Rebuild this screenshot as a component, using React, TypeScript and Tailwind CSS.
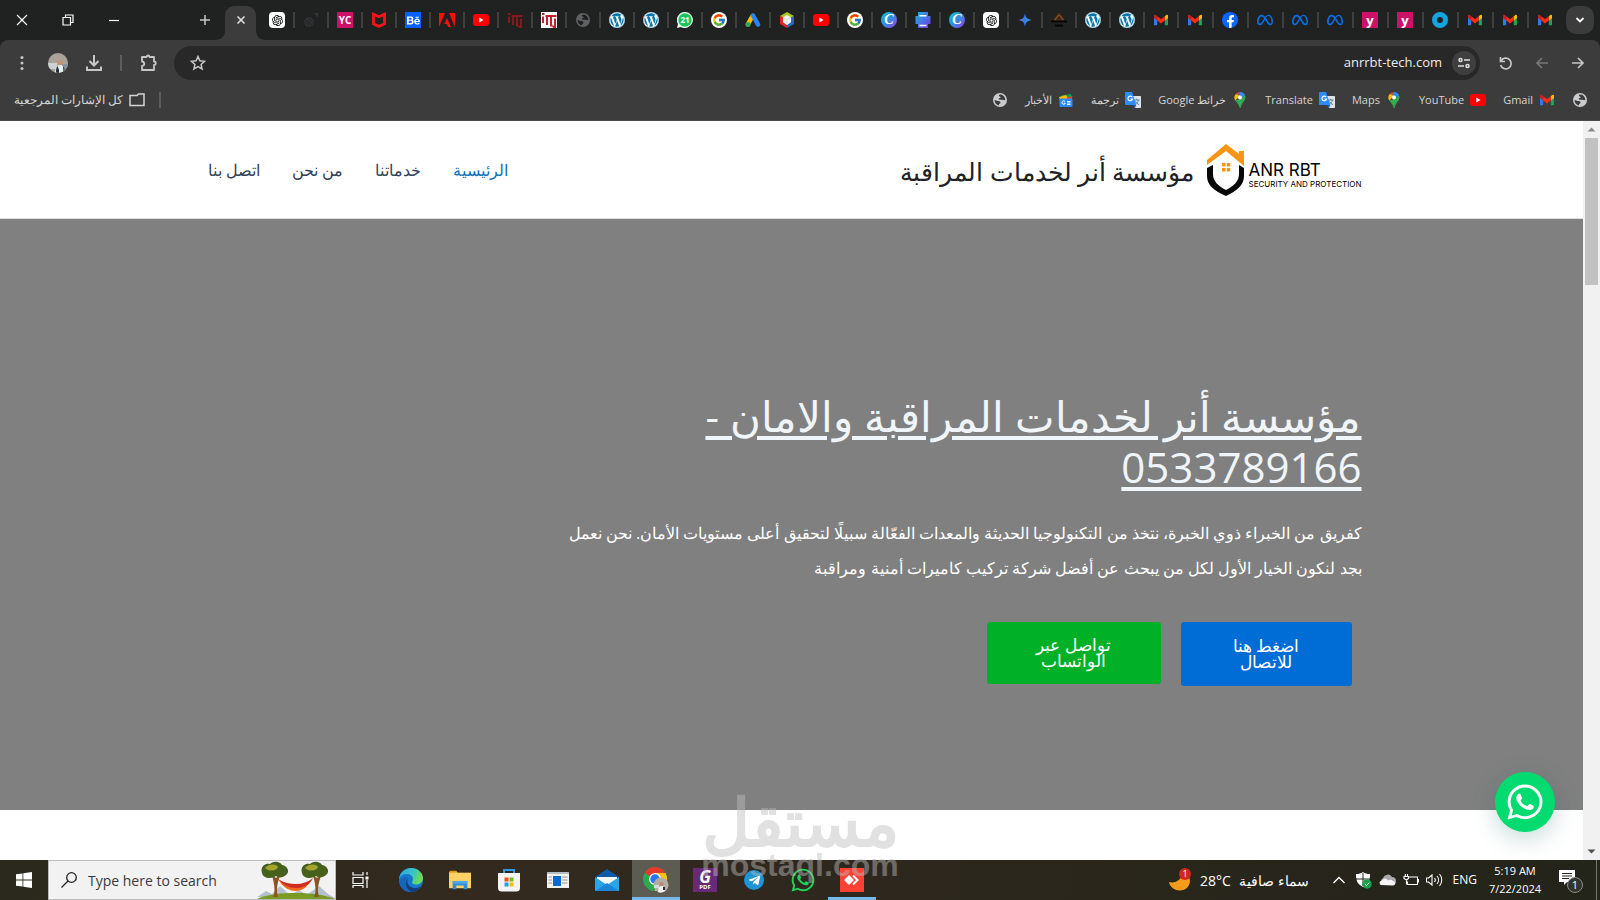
import type { ReactNode } from "react";
import { FaWordpress, FaWhatsapp, FaFacebookF, FaBehance, FaTelegramPlane } from "react-icons/fa";
import { FaMeta } from "react-icons/fa6";
import { FcGoogle } from "react-icons/fc";
import { SiMcafee } from "react-icons/si";
import { RiOpenaiFill } from "react-icons/ri";

/* ---------- small brand marks ---------- */

const Gmail = () => (
  <svg viewBox="0 0 16 16" className="size-4">
    <path d="M1 4v9.3h3.2V6.8z" fill="#2a7df0" />
    <path d="M15 4v9.3h-3.2V6.8z" fill="#1fa550" />
    <path d="M11.8 4.2 13.3 3c.9-.5 1.7.1 1.7 1v2l-3.2 2.5z" fill="#fbbc04" />
    <path d="M4.2 4.2 2.7 3C1.800 2.500 1 3.100 1 4v2l3.200 2.500z" fill="#c5221f" />
    <path d="M4.200 4.200 8 7.200l3.800-3v4.300L8 11.400 4.200 8.500z" fill="#ff2b17" />
  </svg>
);
const YouTube = () => (
  <svg viewBox="0 0 16 16" className="size-4">
    <rect y="2" width="16" height="12" rx="3" fill="#f00" />
    <path d="M6.300 5.500v5L10.500 8z" fill="#fff" />
  </svg>
);
const Pin = () => (
  <svg viewBox="0 0 16 16" className="size-4">
    <path d="M8 0a5.500 5.500 0 0 0-4.200 2L6 4z" fill="#ea4335" />
    <path d="M8 0a5.500 5.500 0 0 1 5 3L8 7 6 4z" fill="#2a8cf4" />
    <path d="M3.800 2a5.500 5.500 0 0 0-.6 6.500L8 4z" fill="#fbbc04" />
    <path d="M13 3c1 2 .5 4-.7 5.700C10.500 11 9.300 12.500 8.700 16h-1C7.300 13 5 11 3.200 8.500L8 7z" fill="#34a853" />
    <circle cx="8" cy="5.500" r="2" fill="#fff" />
  </svg>
);
const TranslateIcon = () => (
  <svg viewBox="0 0 16 16" className="size-4">
    <path d="M6 4h9.300c.4 0 .7.300.7.700V15.300c0 .4-.3.700-.7.700H10z" fill="#dfe3e8" />
    <path d="M9 8h5.500M11.700 6.800V8m1.800 0c-.5 2-2 3.500-3.500 4.500M10.500 9.500c.7 1.300 2 2.500 3.500 3.200" stroke="#5f7f9f" strokeWidth="1" fill="none" />
    <path d="M.8 0H7l4.300 13H.8C.3 13 0 12.700 0 12.200V.8C0 .3.300 0 .8 0z" fill="#2a8cff" />
    <path d="M7.200 5.200A2.300 2.300 0 1 0 7.500 7H5.500" stroke="#fff" strokeWidth="1.200" fill="none" />
    <path d="M8 13h3.300L10 16z" fill="#1a5fc8" />
  </svg>
);
const News = () => (
  <svg viewBox="0 0 16 16" className="size-4">
    <path d="M3 3.500 13 2l1 5H3z" fill="#0c9d58" />
    <path d="m1 5 7-2 3 5H2z" fill="#fbbc04" />
    <path d="m8 6 6.500-2L13 10z" fill="#ea4335" />
    <rect x="1.500" y="6.500" width="13" height="8.500" rx="1" fill="#2a8cff" />
    <path d="M7 9.500a1.700 1.700 0 1 0 .3 1.700H6M9 9.500h3.500M9 11h3.500M9 12.500h3.500" stroke="#fff" strokeWidth=".9" fill="none" />
  </svg>
);
const Globe = ({ dim = false }: { dim?: boolean }) => (
  <svg viewBox="0 0 16 16" className="size-4">
    <circle cx="8" cy="8" r="7" fill={dim ? "#5f6163" : "#c9cbcd"} />
    <path d="M8 2.500c-1.500.3-1.300 1.600-.3 1.900 1.300.4 1.100 1.600 0 1.700-1.500.2-1 1.700.3 1.700h2.400c1.300 0 2.100.8 2.900 0C13 4.500 11 2.500 8 2.500zM2.500 8c0 3 2 5 4.500 5.500V12c.8-.3 1.700-.8 1.500-1.800C8.300 9 6.500 9.200 5.500 9 4.500 8.800 4 8 2.500 8z" fill={dim ? "#202221" : "#3c3c3c"} />
  </svg>
);
const OpenAi = () => (
  <span className="flex size-4 items-center justify-center rounded-sm bg-white text-black">
    <RiOpenaiFill size={13} />
  </span>
);
const Ghost = () => (
  <svg viewBox="0 0 16 16" className="size-4">
    <circle cx="6" cy="10" r="5" fill="#303132" />
    <path d="M11 1h4v5z" fill="#343536" />
    <path d="m3 8 6 5M2 10l5 4M5 6l6 5" stroke="#232425" />
  </svg>
);
const Mark = ({ children, tone }: { children: ReactNode; tone: string }) => (
  <span className={`flex size-4 items-center justify-center text-[10px] leading-4 font-bold text-white ${tone}`}>{children}</span>
);
const Adobe = () => (
  <svg viewBox="0 0 16 16" className="size-4" fill="#fa0f00">
    <path d="M0 1h6L0 15zM16 1h-6l6 14zM8 6l4 9H9.200L8 12H5.200z" />
  </svg>
);
const Itj = ({ boxed = false }: { boxed?: boolean }) => (
  <svg viewBox="0 0 16 16" className="size-4">
    {boxed && <rect width="16" height="16" fill="#fff" />}
    <path d="M2 4.500V11M1 2h2.500M4.500 4h11M6 5v8M10 5v9M14 6.500V15l-2.500-.5M9 13.500h2.500" stroke={boxed ? "#bf2328" : "#a5161c"} strokeWidth={boxed ? 2 : 1.500} fill="none" />
  </svg>
);
const WordPress = () => (
  <span className="flex size-4 items-center justify-center rounded-full bg-white text-[#0877a8]">
    <FaWordpress size={16} />
  </span>
);
const WhatsBadge = () => (
  <svg viewBox="0 0 16 16" className="size-4">
    <path d="M8 0a8 8 0 1 1-4 15L0 16l1-4A8 8 0 0 1 8 0z" fill="#e9fbef" />
    <circle cx="8" cy="8" r="6.700" fill="#1cc45a" />
    <text x="8" y="11" fontSize="8" fontWeight="700" textAnchor="middle" fill="#fff">21</text>
  </svg>
);
const Google = () => (
  <span className="flex size-4 items-center justify-center rounded-full bg-white">
    <FcGoogle size={14} />
  </span>
);
const Ads = () => (
  <svg viewBox="0 0 16 16" className="size-4">
    <path d="M7.500 4 3 12" stroke="#fbbc04" strokeWidth="4.500" strokeLinecap="round" />
    <path d="m8 3.500 5 9" stroke="#2a85f4" strokeWidth="4.500" strokeLinecap="round" />
    <circle cx="3" cy="12.500" r="2.500" fill="#34a853" />
  </svg>
);
const Cube = () => (
  <svg viewBox="0 0 16 16" className="size-4">
    <path d="m8 0 7 4-7 4-7-4z" fill="#a8c820" />
    <path d="M1 4v8l7 4V8z" fill="#e0252b" />
    <path d="M15 4v8l-7 4V8z" fill="#2468c8" />
    <path d="m8 3 4 2.300v5L8 13l-4-2.700v-5z" fill="#f4f4f0" />
    <path d="m4 5.300 4 2.300 4-2.300M8 7.600V13" stroke="#c8c8c8" fill="none" strokeWidth=".7" />
  </svg>
);
const Canva = () => (
  <span className="flex size-4 items-center justify-center rounded-full bg-linear-to-br from-[#00c4cc] via-[#2f8be0] to-[#7d2ae8] font-['Liberation_Serif',serif] text-[14px] leading-4 font-bold text-white italic">C</span>
);
const Printer = () => (
  <svg viewBox="0 0 16 16" className="size-4">
    <defs>
      <linearGradient id="pr" x1="0" y1="0" x2="1" y2="1">
        <stop offset="0" stopColor="#12b8e0" />
        <stop offset="1" stopColor="#7a35ea" />
      </linearGradient>
    </defs>
    <path d="M3 0h10v4h2.500v8H13v4H3v-4H.5V4H3z" fill="url(#pr)" />
    <path d="M4.500 3.800h7M4.500 13.500h7" stroke="#fff" strokeWidth="1.500" />
  </svg>
);
const Spark = () => (
  <svg viewBox="0 0 16 16" className="size-4">
    <defs>
      <linearGradient id="sp">
        <stop offset="0" stopColor="#9b72cb" />
        <stop offset=".5" stopColor="#2b7de9" />
        <stop offset="1" stopColor="#5bb0e8" />
      </linearGradient>
    </defs>
    <path d="M8 1C8.800 6 10 7.200 15 8 10 8.800 8.800 10 8 15 7.200 10 6 8.800 1 8 6 7.200 7.200 6 8 1z" fill="url(#sp)" />
  </svg>
);
const DarkLogo = () => (
  <svg viewBox="0 0 16 16" className="size-4">
    <path d="m8 1 5 7H3z" fill="#3a2115" stroke="#6a3a1c" />
    <path d="m4 8 4-5 4 5" stroke="#a45a26" fill="none" />
    <path d="M0 9.500h16M4 13.500h8" stroke="#050505" strokeWidth="2" />
  </svg>
);
const Facebook = () => (
  <span className="flex size-4 items-end justify-center overflow-hidden rounded-full bg-[#0866ff] text-white">
    <FaFacebookF size={13} />
  </span>
);
const Ring = () => (
  <svg viewBox="0 0 16 16" className="size-4">
    <circle cx="8" cy="8" r="5.500" fill="none" stroke="#14a5e0" strokeWidth="5" />
  </svg>
);
const Yc = () => <Mark tone="bg-[#cc1168]">YC</Mark>;
const Y = () => (
  <Mark tone="bg-[#cc1168]">
    <span className="text-[13px] leading-3">y</span>
  </Mark>
);
const Mc = () => <SiMcafee size={16} color="#f5141e" />;
const Be = () => (
  <Mark tone="bg-[#0560ff]">
    <FaBehance size={13} />
  </Mark>
);
const MetaIcon = () => <FaMeta size={16} color="#0a6fe8" />;

const narrowTabs: [string, () => ReactNode][] = [
  ["ChatGPT", OpenAi], ["Tab", Ghost], ["YC", Yc], ["McAfee", Mc], ["Behance", Be], ["Adobe", Adobe], ["YouTube", YouTube],
  ["ITJ", () => <Itj />], ["ITJ", () => <Itj boxed />], ["Page", () => <Globe dim />], ["WordPress", WordPress],
  ["WordPress", WordPress], ["WhatsApp", WhatsBadge], ["Google", Google], ["Google Ads", Ads], ["Cube", Cube],
  ["YouTube", YouTube], ["Google", Google], ["Canva", Canva], ["Print", Printer], ["Canva", Canva], ["ChatGPT", OpenAi],
  ["Gemini", Spark], ["Logo", DarkLogo], ["WordPress", WordPress], ["WordPress", WordPress], ["Gmail", Gmail],
];
const wideTabs: [string, () => ReactNode][] = [
  ["Gmail", Gmail], ["Facebook", Facebook], ["Meta", MetaIcon], ["Meta", MetaIcon], ["Meta", MetaIcon], ["Y", Y], ["Y", Y],
  ["Ring", Ring], ["Gmail", Gmail], ["Gmail", Gmail],
];

function Tab({ name, Icon, width, last }: { name: string; Icon: () => ReactNode; width: string; last?: boolean }) {
  return (
    <button aria-label={name} className={`flex h-5 shrink-0 items-center justify-between ${width}`}>
      <Icon />
      {!last && <span className="mr-2 h-4 w-0.5 bg-[#3f4140]" />}
    </button>
  );
}

function TabStrip() {
  return (
    <div className="flex h-10 items-center bg-[#202221]">
      <div className="flex w-[188px] shrink-0 items-center text-white">
        <button aria-label="Close" className="flex h-8 w-11 items-center justify-center">
          <svg viewBox="0 0 12 12" className="size-3" stroke="currentColor" strokeWidth="1.200"><path d="m1 1 10 10M11 1 1 11" /></svg>
        </button>
        <button aria-label="Restore" className="flex h-8 w-12 items-center justify-center">
          <svg viewBox="0 0 12 12" className="size-3" stroke="currentColor" strokeWidth="1.200" fill="none"><path d="M1 3.500h7.500V11H1zM3.500 3.500V1H11v7.500H8.500" /></svg>
        </button>
        <button aria-label="Minimize" className="flex h-8 w-11 items-center justify-center">
          <svg viewBox="0 0 12 12" className="size-3" stroke="currentColor" strokeWidth="1.200"><path d="M1 6.500h10" /></svg>
        </button>
      </div>
      <button aria-label="New tab" className="flex h-8 w-[34px] shrink-0 items-center justify-center text-[#c7c7c7]">
        <svg viewBox="0 0 12 12" className="size-3" stroke="currentColor" strokeWidth="1.500"><path d="M6 1v10M1 6h10" /></svg>
      </button>
      <div className="flex h-10 w-[47px] shrink-0 items-end pt-1.5">
        <svg viewBox="0 0 46 34" className="h-[34px] w-[46px] overflow-visible">
          <path d="M-8 34C0 34 3 30 3 24V10C3 4 7 0 13 0h11c6 0 10 4 10 10v14c0 6 3 10 10 10z" fill="#3c3c3c" />
          <path d="m15.500 10.500 7 7m0-7-7 7" stroke="#dedede" strokeWidth="1.600" />
        </svg>
      </div>
      {narrowTabs.map(([name, Icon], i) => <Tab key={i} name={name} Icon={Icon} width="w-[34px]" />)}
      {wideTabs.map(([name, Icon], i) => <Tab key={i} name={name} Icon={Icon} width="w-[35px]" />)}
      <Tab name="Gmail" Icon={Gmail} width="w-4" last />
      <button aria-label="Search tabs" className="mr-1.5 ml-auto flex size-7 shrink-0 items-center justify-center rounded-[10px] bg-[#3c3c3c] text-white">
        <svg viewBox="0 0 10 10" className="size-2.5" stroke="currentColor" strokeWidth="1.800" fill="none"><path d="m1.500 3 3.500 3.500L8.500 3" /></svg>
      </button>
    </div>
  );
}

function Toolbar() {
  return (
    <div className="flex h-[46px] items-center rounded-t-lg bg-[#3c3c3c] text-[#c7c7c7]">
      <button aria-label="Menu" className="ml-3.5 flex size-4 items-center justify-center">
        <svg viewBox="0 0 16 16" className="size-4" fill="currentColor"><circle cx="8" cy="2.500" r="1.500" /><circle cx="8" cy="8" r="1.500" /><circle cx="8" cy="13.500" r="1.500" /></svg>
      </button>
      <button aria-label="Profile" className="ml-[18px] size-5">
        <svg viewBox="0 0 20 20" className="size-5">
          <clipPath id="av"><circle cx="10" cy="10" r="10" /></clipPath>
          <g clipPath="url(#av)">
            <path d="M0 0h20v20H0z" fill="#a9a39a" /><path d="M0 10h9v6H0z" fill="#cfd2d4" /><path d="M14 11h6v9h-6z" fill="#87949b" />
            <circle cx="12" cy="9.500" r="2.500" fill="#c79270" /><path d="M7 20c0-5 2-8 5-8s5 3 5 8z" fill="#e9edf0" /><path d="M8 20c0-3 0-5 1.500-7l1.500 4v3zM15 13c1.500 1.500 2 4 2 7h-1.500z" fill="#22303a" />
          </g>
        </svg>
      </button>
      <button aria-label="Downloads" className="ml-[17px] size-[18px]">
        <svg viewBox="0 0 18 18" className="size-[18px]" stroke="currentColor" strokeWidth="2" fill="none"><path d="M9 1v10M4.500 7 9 11.500 13.500 7M2 12.500V16h14v-3.500" /></svg>
      </button>
      <span className="ml-[17px] h-4 w-0.5 bg-[#5c5c5c]" />
      <button aria-label="Extensions" className="ml-[18px] size-[18px]">
        <svg viewBox="0 0 18 18" className="size-[18px]" stroke="currentColor" strokeWidth="1.800" fill="none" strokeLinejoin="round"><path d="M2 3h4.500c0-2 3-2 3 0H14v4.500c2.300 0 2.300 3.500 0 3.500v5H2v-4c3-.3 3-4.200 0-4.500z" /></svg>
      </button>
      <div className="ml-4 flex h-[34px] flex-1 items-center rounded-full bg-[#282828] px-1">
        <button aria-label="Bookmark this page" className="ml-3 size-4">
          <svg viewBox="0 0 16 16" className="size-4" stroke="currentColor" strokeWidth="1.500" fill="none"><path d="m8 1.500 1.900 4.300 4.700.5-3.500 3.100 1 4.600L8 11.600 3.900 14l1-4.600L1.400 6.300l4.700-.5z" /></svg>
        </button>
        <input aria-label="Address" defaultValue="anrrbt-tech.com" className="mr-2.5 min-w-0 flex-1 bg-transparent text-right text-[13px] text-[#ececec] outline-none" />
        <button aria-label="Site information" className="flex size-6 items-center justify-center rounded-full bg-[#3f3f3f]">
          <svg viewBox="0 0 12 12" className="size-3" stroke="#e0e0e0" strokeWidth="1.500" fill="none"><circle cx="2.500" cy="3" r="1.500" /><path d="M6 3h6M0 9h6" /><circle cx="9.500" cy="9" r="1.500" /></svg>
        </button>
      </div>
      <button aria-label="Reload" className="ml-[18px] size-4">
        <svg viewBox="0 0 16 16" className="size-4" stroke="currentColor" strokeWidth="1.700" fill="none"><path d="M2.500 2v4.500H7M3 6a5.400 5.400 0 1 1-.4 4" /></svg>
      </button>
      <button aria-label="Forward" className="ml-5 size-4 text-[#777]">
        <svg viewBox="0 0 16 16" className="size-4" stroke="currentColor" strokeWidth="1.700" fill="none"><path d="M14 8H3m5-5L3 8l5 5" /></svg>
      </button>
      <button aria-label="Back" className="mr-3.5 ml-5 size-4">
        <svg viewBox="0 0 16 16" className="size-4" stroke="currentColor" strokeWidth="1.700" fill="none"><path d="M2 8h11M8 3l5 5-5 5" /></svg>
      </button>
    </div>
  );
}

const bookmarks: [string, () => ReactNode][] = [
  ["الأخبار", News], ["ترجمة", TranslateIcon], ["خرائط Google", Pin], ["Translate", TranslateIcon], ["Maps", Pin], ["YouTube", YouTube], ["Gmail", Gmail],
];

function Bookmarks() {
  return (
    <div className="flex h-[35px] items-center justify-between border-b border-[#4a4a4a] bg-[#3c3c3c] pb-1.5 text-[11px] text-[#d4d4d4]">
      <div className="ml-3.5 flex items-center">
        <button className="flex items-center gap-1.5 text-[12px]">
          <span dir="rtl">كل الإشارات المرجعية</span>
          <svg viewBox="0 0 16 14" className="h-3.5 w-4" stroke="currentColor" strokeWidth="1.500" fill="none"><path d="M1 2.500h7l1.500-1.500H15v11.500H1z" /></svg>
        </button>
        <span className="ml-3.5 h-4 w-0.5 bg-[#5c5c5c]" />
      </div>
      <div className="mr-3 flex items-center gap-[17px]">
        <a href="#page" aria-label="Page"><Globe /></a>
        {bookmarks.map(([label, Icon]) => (
          <a key={label} href={`#${label}`} className="flex items-center gap-1.5 whitespace-nowrap"><span dir="auto">{label}</span><Icon /></a>
        ))}
        <a href="#home" aria-label="Home"><Globe /></a>
      </div>
    </div>
  );
}

/* ---------- web page ---------- */

function BrandLogo() {
  return (
    <div dir="ltr" className="flex items-center">
      <svg viewBox="0 0 38 52" className="h-[52px] w-[38px]">
        <path d="M0 16 19 0l13 10V7h5v15L19 7 0 21z" fill="#fb9414" />
        <path d="M0 24l6-3v9c0 7 5 12 13 16 8-4 13-9 13-16v-9l5 3v8c0 9-7 15-18 20C7 47 0 41 0 32z" fill="#080808" />
        <path d="M15 19h3.500v3.500H15zM19.700 19h3.500v3.500h-3.500zM15 24h3.500v3.500H15zM19.700 24h3.500v3.500h-3.500z" fill="#fb9414" />
      </svg>
      <div className="ml-1 flex w-[120px] flex-col pt-3 font-[Inter,sans-serif] whitespace-nowrap text-black">
        <span className="text-[17px] leading-[17px]">ANR RBT</span>
        <span className="text-[8px] leading-[10px]">SECURITY AND PROTECTION</span>
      </div>
    </div>
  );
}

const nav = ["الرئيسية", "خدماتنا", "من نحن", "اتصل بنا"];

function Site() {
  return (
    <div className="flex flex-1">
      <main dir="rtl" className="flex flex-1 flex-col bg-white">
        <header className="h-[98px] border-b border-[#ddd]">
          <div className="mx-auto flex h-full max-w-[1200px] items-center justify-between">
            <div className="flex items-center gap-3 pr-[23px]">
              <BrandLogo />
              <p className="pt-1 text-[25px] font-medium text-[#202124]">مؤسسة أنر لخدمات المراقبة</p>
            </div>
            <nav className="flex text-[16px]">
              {nav.map((n, i) => (
                <a key={n} href={`#${n}`} className={i === 0 ? "px-4 text-[#1070b8]" : "px-4 text-[#334155]"}>{n}</a>
              ))}
            </nav>
          </div>
        </header>
        <section className="flex flex-1 items-center bg-[#808080] pt-[46px]">
          <div className="mx-auto w-full max-w-[1200px] pr-[30px] text-white">
            <h1 className="text-[42px] leading-[51px] font-medium whitespace-nowrap text-[#f0f5fa] underline decoration-4 underline-offset-4">
              مؤسسة أنر لخدمات المراقبة والامان -<br />0533789166
            </h1>
            <p className="mt-6 text-[16px] leading-[35px] font-medium whitespace-nowrap">
              كفريق من الخبراء ذوي الخبرة، نتخذ من التكنولوجيا الحديثة والمعدات الفعّالة سبيلًا لتحقيق أعلى مستويات الأمان. نحن نعمل<br />
              بجد لنكون الخيار الأول لكل من يبحث عن أفضل شركة تركيب كاميرات أمنية ومراقبة
            </p>
            <div className="mt-9 flex items-start gap-5 pr-2.5 text-center text-[17px] leading-4 font-medium">
              <a href="#call" className="flex h-16 w-[171px] items-center justify-center rounded-[3px] bg-[#006cd6]"><span>اضغط هنا<br />للاتصال</span></a>
              <a href="#whatsapp" className="flex h-[62px] w-[174px] items-center justify-center rounded-[3px] bg-[#00b128]"><span>تواصل عبر<br />الواتساب</span></a>
            </div>
          </div>
        </section>
        <div className="h-[50px]" />
      </main>
      <div aria-hidden="true" className="flex w-[17px] flex-col items-center bg-[#f1f1f1]">
        <svg viewBox="0 0 17 17" className="size-[17px]" fill="#8a8a8a"><path d="m8.500 6.500 4 4h-8z" /></svg>
        <span className="h-[147px] w-[13px] bg-[#c1c1c1]" />
        <svg viewBox="0 0 17 17" className="mt-auto size-[17px]" fill="#505050"><path d="m8.500 10.500 4-4h-8z" /></svg>
      </div>
    </div>
  );
}

/* ---------- taskbar ---------- */

const Hammock = () => (
  <svg viewBox="0 0 78 38" className="h-[38px] w-[78px]">
    <path d="m0 36 9-6 6 3 8-8 10 9 9-5 8 5 12-9 9 8 7 4v1z" fill="#b5bfd0" />
    <path d="M0 38c10-5 25-6 40-6s28 2 38 6z" fill="#7a9a24" />
    <path d="M16 36c3-6 1-14-1-22l4 3 5-4c-4 8-5 17-3 23zM57 36c3-6 1-14-1-22l4 3 5-4c-4 8-5 17-3 23z" fill="#8a5424" />
    <path d="M21 18c5 9 12 12 18 12s12-4 17-13c-3 4-9 7-17 7s-14-2-18-6z" fill="#f06a1d" />
    <path d="M21 18c6 4 12 5 18 5s12-2 17-6c-5 8-10 10-17 10s-13-3-18-9z" fill="#cf2c22" />
    <path d="M5 12c-2-6 3-10 8-9 4-4 11-2 12 1 6 1 8 7 4 10-3 3-8 3-10 1-4 3-13 3-14-3zM45 12c-2-6 3-10 8-9 4-4 11-2 12 1 6 1 8 7 4 10-3 3-8 3-10 1-4 3-13 3-14-3z" fill="#46611c" />
    <path d="M8 7c4-5 12-4 13-1-1 4-9 5-13 1zM48 7c4-5 12-4 13-1-1 4-9 5-13 1z" fill="#a3a42c" />
  </svg>
);
const Edge = () => (
  <svg viewBox="0 0 24 24" className="size-6">
    <defs>
      <linearGradient id="eg" x1="0" y1="0" x2="1" y2=".3"><stop offset="0" stopColor="#2ba3e4" /><stop offset=".6" stopColor="#36c5c8" /><stop offset="1" stopColor="#6ddb56" /></linearGradient>
    </defs>
    <circle cx="12" cy="12" r="12" fill="#1678cc" />
    <path d="M0 11C1 4 6 0 12 0c7 0 12 5 12 10 0 4-3 6.500-7 6.500-3 0-4-1-4-2 0-1 1-1.500 1-3.500 0-3-3-5-6.500-5C4 6 1 8 0 11z" fill="url(#eg)" />
    <path d="M9 9.500c-4 3-3 11 3.500 14.400C7 25 1 20 .3 14 1 10 5 8.500 9 9.500z" fill="#1565b8" />
    <path d="M9.500 10c-2.500 3-1 8 3.500 9.500 4 1.300 7 .2 9-1.500-2 4-6 6-9.500 5.900C6 21 5.500 12.500 9.500 10z" fill="#123f7a" />
  </svg>
);
const Folder = () => (
  <svg viewBox="0 0 24 20" className="h-5 w-[22px]">
    <path d="M0 2C0 1 1 0 2 0h6l2 3H0z" fill="#e59b16" /><path d="M0 2h24v17H0z" fill="#ffd266" />
    <path d="M4 11h16v9h-4v-4H8v4H4z" fill="#2f8fdc" /><path d="M4 11h16v3H4z" fill="#50a8ea" />
  </svg>
);
const Store = () => (
  <svg viewBox="0 0 24 24" className="size-6">
    <path d="M7 6V2h10v4" stroke="#2a9be8" strokeWidth="2" fill="none" />
    <path d="M1 5h22v15c0 2.500-1.500 3.500-3.500 3.500h-15C2.500 23.500 1 22.500 1 20z" fill="#f3f3f3" />
    <path d="M7.500 9.500h4v4h-4z" fill="#f04e25" /><path d="M12.500 9.500h4v4h-4z" fill="#80ba21" /><path d="M7.500 14.500h4v4h-4z" fill="#1aa3e8" /><path d="M12.500 14.500h4v4h-4z" fill="#fdb813" />
  </svg>
);
const Reader = () => (
  <svg viewBox="0 0 22 16" className="h-4 w-[22px]">
    <path d="M0 0h22v16H0z" fill="#f2f2f2" /><path d="M0 0h22v2H0z" fill="#b5bcc4" /><path d="M6 4h8v10H6z" fill="#0a6ad0" />
    <path d="M1.500 5H5M1.500 8H5M1.500 11H5M15 5h5.500M15 8h5.500M15 11h5.500" stroke="#999" />
  </svg>
);
const Mail = () => (
  <svg viewBox="0 0 24 22" className="h-[22px] w-6">
    <path d="m12 0 12 8v2H0V8z" fill="#0b5cab" /><path d="M2 8h20v8H2z" fill="#f4f6f8" /><path d="M0 8l12 8 12-8v14H0z" fill="#2aa5e8" /><path d="m0 22 12-8 12 8z" fill="#1c86d6" />
  </svg>
);
const Chrome = () => (
  <svg viewBox="0 0 26 26" className="size-[26px]">
    <circle cx="12" cy="12" r="12" fill="#2da94f" />
    <path d="M12 12 1.600 6A12 12 0 0 1 22.400 6z" fill="#e8392b" /><path d="M12 12V6h10.400A12 12 0 0 1 12 24z" fill="#fcc31b" />
    <circle cx="12" cy="12" r="6" fill="#fff" /><circle cx="12" cy="12" r="4.700" fill="#2a75ea" />
    <circle cx="18" cy="18" r="7.500" fill="#b4aca2" /><path d="M15 25c0-4 1.500-6 3.500-6s3.500 2 3.500 5c-2 1.500-5 2-7 1z" fill="#eef0f2" /><path d="M11 18h5v3h-5z" fill="#d6d8da" /><circle cx="18.500" cy="17" r="2" fill="#b88668" /><path d="M20 20h2v3h-2z" fill="#2a2f35" />
  </svg>
);
const Pdf = () => (
  <span className="flex size-6 flex-col items-center justify-center bg-[#682a78] font-bold text-white">
    <span className="text-[17px] leading-[14px] italic">G</span><span className="text-[6px] leading-[7px]">PDF</span>
  </span>
);
const Telegram = () => <span className="flex size-5 items-center justify-center rounded-full bg-[#1e93d5] text-white"><FaTelegramPlane size={13} /></span>;
const WhatsTask = () => <FaWhatsapp size={26} color="#1fd35c" />;
const AnyDesk = () => (
  <svg viewBox="0 0 24 24" className="size-6"><path d="M0 0h24v24H0z" fill="#fb4235" /><path d="m9 7 5 5-5 5-5-5z" fill="#fff" /><path d="m13 7.500 4.500 4.500-4.500 4.500" stroke="#fff" strokeWidth="2" fill="none" /></svg>
);

const apps: [string, () => ReactNode, string][] = [
  ["Edge", Edge, ""], ["File Explorer", Folder, ""], ["Store", Store, ""], ["Reader", Reader, ""], ["Mail", Mail, ""],
  ["Chrome", Chrome, "border-b-3 border-[#76b9ed] bg-[#5d5c52] pt-0.5"], ["PDF", Pdf, ""], ["Telegram", Telegram, ""], ["WhatsApp", WhatsTask, ""],
  ["AnyDesk", AnyDesk, "border-b-3 border-[#76b9ed] pt-0.5"],
];

function Taskbar() {
  return (
    <footer className="flex h-10 items-center bg-linear-to-r from-[#2b291d] via-[#33291f] via-30% to-[#23241a] text-white">
      <button aria-label="Start" className="flex h-10 w-12 shrink-0 items-center justify-center">
        <svg viewBox="0 0 16 16" className="size-4" fill="#fff"><path d="M0 2.300 6.500 1.400v6.200H0zM7.300 1.300 16 0v7.600H7.300zM0 8.400h6.500v6.200L0 13.700zM7.300 8.400H16V16l-8.700-1.300z" /></svg>
      </button>
      <label className="flex h-10 w-[288px] shrink-0 items-center border border-[#bcbcbc] bg-[#f2f2f2] pl-3">
        <svg viewBox="0 0 16 16" className="size-4" stroke="#222" strokeWidth="1.300" fill="none"><circle cx="10.500" cy="5.500" r="4.800" /><path d="M7 9 .5 15.500" /></svg>
        <input aria-label="Search" placeholder="Type here to search" className="ml-[11px] min-w-0 flex-1 bg-transparent text-[14px] outline-none placeholder:text-[#3a3a3a]" />
        <Hammock />
      </label>
      <button aria-label="Task View" className="mr-[3px] flex h-10 w-12 shrink-0 items-center justify-center">
        <svg viewBox="0 0 17 16" className="h-4 w-[17px]" stroke="#fff" strokeWidth="1.200" fill="none"><path d="M1 0v3h10V0M1 5.500h10v6H1zM1 16v-2.500h10V16M15 0v3M15 8v8" /><path d="M13.500 4.500h3v3h-3z" fill="#fff" stroke="none" /></svg>
      </button>
      <div className="flex h-10 gap-px">
        {apps.map(([name, Icon, tone]) => (
          <button key={name} aria-label={name} className={`flex h-10 w-12 items-center justify-center ${tone}`}><Icon /></button>
        ))}
      </div>
      <div className="ml-auto flex items-center text-[14px]">
        <svg viewBox="0 0 24 24" className="size-6">
          <path d="M14 3c1 8-6 13-13 11 2 11 20 12 21-1 0-5-4-9-8-10z" fill="#f59b1c" /><circle cx="17" cy="6" r="6" fill="#cc2a1e" /><text x="17" y="9" fontSize="9" fill="#fff" textAnchor="middle">1</text>
        </svg>
        <span className="ml-2">28°C</span>
        <span dir="rtl" className="ml-2 whitespace-nowrap">سماء صافية</span>
        <svg viewBox="0 0 12 8" className="ml-6 h-2 w-3" stroke="#fff" strokeWidth="1.300" fill="none"><path d="m.5 7 5.500-5.500L11.500 7" /></svg>
        <svg viewBox="0 0 17 17" className="ml-2.5 size-[17px]"><path d="M8 0c2 1.500 4 2 7 2 0 6-1 10-7 13C2 12 1 8 1 2c3 0 5-.5 7-2z" fill="#fff" /><path d="M8 1v13M1 7h14" stroke="#23241a" /><circle cx="12" cy="12" r="4.700" fill="#17a34a" /><path d="m9.800 12 1.700 1.600 2.700-3" stroke="#fff" fill="none" /></svg>
        <svg viewBox="0 0 17 12" className="ml-[7px] h-3 w-[17px]"><path d="M4 11a4 4 0 0 1 0-7 5 5 0 0 1 9-1 4 4 0 0 1 0 8z" fill="#a7a9aa" /><path d="M2 11c-2-1-2-4 1-4.500C4 4 8 4 9 6.500c2-1 4-1 5 .5 3 .5 3 4 0 4.500z" fill="#f5f5f5" /></svg>
        <svg viewBox="0 0 16 12" className="ml-[7px] h-3 w-4" stroke="#fff" strokeWidth="1.100" fill="none"><path d="M6 3h8.500v7.500h-10V7.500M15.500 5v3.500M1 2.500h4.500v2L3.500 6 1 4.500zM2.300 0v2.500M4.500 0v2.500M3.500 6v4.500" /></svg>
        <svg viewBox="0 0 17 14" className="ml-[7px] h-3.5 w-[17px]" stroke="#fff" strokeWidth="1.100" fill="none"><path d="M.5 5h2L6 2v10L2.500 9h-2zM8.500 5c1 1.200 1 2.800 0 4M11 3c2 2.300 2 5.700 0 8M13.500 1c3 3.500 3 8.500 0 12" /></svg>
        <span className="ml-2.5 text-[12px]">ENG</span>
        <div className="ml-2 flex w-[60px] flex-col items-center text-[11px] leading-[18px]"><span>5:19 AM</span><span>7/22/2024</span></div>
        <button aria-label="Notifications" className="mr-3 ml-[13px] size-[26px]">
          <svg viewBox="0 0 26 26" className="size-[26px]"><path d="M1 3h16v12H9l-3 3v-3H1z" fill="#fff" /><path d="M4 6.500h10M4 9h10M4 11.500h7" stroke="#23241a" /><circle cx="17" cy="18" r="7.500" fill="#33342c" stroke="#8a8a84" /><text x="17" y="22" fontSize="11" fill="#fff" textAnchor="middle">1</text></svg>
        </button>
        <span className="mr-[3px] h-10 w-px bg-[#77776f]" />
      </div>
    </footer>
  );
}

export default function App() {
  return (
    <div className="relative flex min-h-screen flex-col bg-[#202221] font-['Open_Sans','Noto_Sans',sans-serif]">
      <TabStrip />
      <Toolbar />
      <Bookmarks />
      <Site />
      <Taskbar />
      <a href="#chat" aria-label="WhatsApp" className="absolute right-[45px] bottom-[68px] flex size-[60px] items-center justify-center rounded-full bg-[#03da70] text-white shadow-[0_6px_24px_rgba(7,94,84,0.24)]">
        <FaWhatsapp size={40} />
      </a>
      <div className="pointer-events-none absolute bottom-4 left-1/2 flex -translate-x-1/2 flex-col items-center font-bold text-[#bdbdbd] opacity-45">
        <span dir="rtl" className="-mb-1 text-[66px] leading-[60px]">مستقل</span>
        <span className="font-['Liberation_Sans',sans-serif] text-[32px] leading-[38px]">mostaql.com</span>
      </div>
    </div>
  );
}
